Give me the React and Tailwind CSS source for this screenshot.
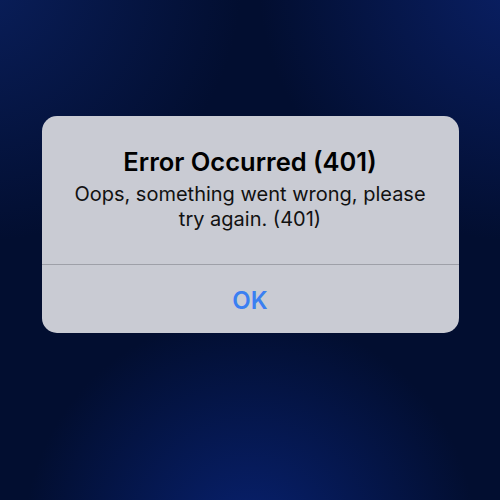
import React from "react";

// Alert dialog over a dark blue backdrop
const App = () => {
  return (
    <div
      className="w-[500px] h-[500px] flex items-start justify-center pt-[116px] bg-[#020e30] bg-[radial-gradient(circle_at_50%_108%,#08216f_0%,rgba(2,14,48,0)_38%),radial-gradient(circle_at_-5%_-5%,#0a1f5c_0%,rgba(2,14,48,0)_36%),radial-gradient(circle_at_105%_-5%,#0a2066_0%,rgba(2,14,48,0)_36%)]"
      style={{ fontFamily: "Inter, 'Liberation Sans', sans-serif" }}
    >
      <div className="w-[417px] h-[217px] rounded-[15px] bg-[#c9cbd3] flex flex-col">
        <div className="h-[148px] flex flex-col items-center pt-[30px] px-[24px] text-center">
          <h1 className="text-[25.5px] leading-[32px] font-semibold text-black">
            Error Occurred (401)
          </h1>
          <p className="mt-[4px] text-[20px] leading-[25px] text-[#111]">
            Oops, something went wrong, please try again. (401)
          </p>
        </div>
        <div className="h-px bg-[#9ea0a8]" />
        <button className="flex-1 pt-[3px] text-[24px] font-semibold text-[#3a7ff2]">
          OK
        </button>
      </div>
    </div>
  );
};

export default App;
